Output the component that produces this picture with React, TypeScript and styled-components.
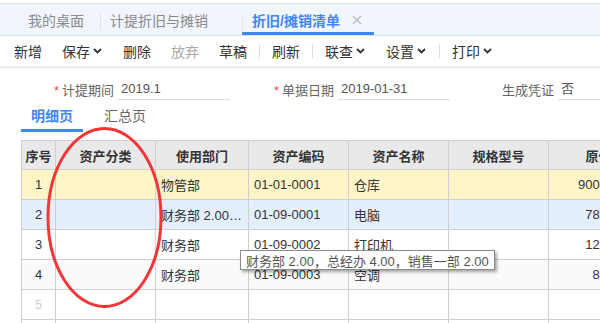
import React from 'react';
import styled, { createGlobalStyle, css } from 'styled-components';

const GlobalStyle = createGlobalStyle`
  html, body {
    margin: 0;
    padding: 0;
    overflow: hidden;
    background: #fff;
  }
  body {
    font-family: "Liberation Sans", "Noto Sans CJK SC", sans-serif;
    color: #333;
  }
`;

const Page = styled.div`
  position: relative;
  width: 600px;
  height: 323px;
  overflow: hidden;
`;

const TabBar = styled.div`
  margin-top: 3px;
  height: 31px;
  display: flex;
  align-items: stretch;
  padding-left: 18px;
  background: #f1f5fd;
  border-top: 1px solid #dcdfe4;
  border-bottom: 1px solid #dde4ef;
`;

type TabProps = { active?: boolean; first?: boolean };

const Tab = styled.div<TabProps>`
  position: relative;
  display: flex;
  align-items: center;
  padding: 0 12px 0 10px;
  font-size: 14px;
  color: #8a8a8a;
  ${(p) =>
    p.first &&
    css`
      padding-right: 16px;
    `}
  ${(p) =>
    !p.first &&
    css`
      &::before {
        content: '';
        position: absolute;
        left: 0;
        top: 10px;
        height: 16px;
        width: 1px;
        background: #e0e4ea;
      }
    `}
  ${(p) =>
    p.active &&
    css`
      color: #3e87f6;
      font-weight: bold;
      box-shadow: inset 0 -3px 0 #3e87f6;
    `}
`;

const CloseSlot = styled.span<{ visible?: boolean }>`
  display: flex;
  align-items: center;
  width: 10px;
  height: 10px;
  margin-left: 12px;
  visibility: ${(p) => (p.visible ? 'visible' : 'hidden')};
`;

const Toolbar = styled.div`
  height: 30px;
  display: flex;
  align-items: center;
  padding-left: 4px;
  background: #fff;
  box-shadow: 0 2px 3px rgba(0, 0, 0, 0.1);
`;

const ToolButton = styled.div<{ disabled?: boolean }>`
  display: flex;
  align-items: center;
  padding: 0 10px;
  font-size: 14px;
  color: ${(p) => (p.disabled ? '#a8a8a8' : '#333')};
`;

const Caret = styled.span`
  display: flex;
  align-items: center;
  width: 10px;
  margin-left: 3px;
`;

const ToolSep = styled.span`
  width: 1px;
  height: 15px;
  margin: 0 2px;
  background: #dedede;
`;

const FormRow = styled.div`
  display: flex;
  margin-top: 12px;
  padding-left: 14px;
  gap: 4px;
`;

const Field = styled.div`
  display: flex;
  align-items: center;
  width: 216px;
  flex-shrink: 0;
`;

const FieldLabel = styled.div`
  width: 100px;
  margin-right: 4px;
  text-align: right;
  font-size: 13px;
  color: #666;
`;

const Required = styled.span`
  color: #f04848;
  margin-right: 3px;
`;

const FieldValue = styled.div`
  width: 112px;
  height: 22px;
  line-height: 22px;
  padding-left: 3px;
  box-sizing: border-box;
  flex-shrink: 0;
  font-size: 13px;
  color: #555;
  border-bottom: 1px solid #dcdcdc;
`;

const SubTabs = styled.div`
  display: flex;
  margin-left: 21px;
  height: 32px;
  gap: 11px;
`;

const SubTab = styled.div<{ active?: boolean }>`
  display: flex;
  align-items: center;
  padding: 0 10px;
  box-sizing: border-box;
  font-size: 14px;
  color: #666;
  border-bottom: 3px solid transparent;
  ${(p) =>
    p.active &&
    css`
      color: #3e87f6;
      font-weight: bold;
      border-bottom-color: #3e87f6;
    `}
`;

const Grid = styled.div`
  margin-top: 8px;
  margin-left: 21px;
  width: 628px;
  border-left: 1px solid #cfcfcf;
  border-top: 1px solid #cfcfcf;
`;

const columns = '34px 100px 93px 100px 100px 100px 100px';

const HeaderRow = styled.div`
  display: grid;
  grid-template-columns: ${columns};
  height: 29px;
  background: #e9e9e9;
`;

type RowTone = 'selected' | 'hover' | 'plain' | 'alt';

const toneColor: Record<RowTone, string> = {
  selected: '#fff5c9',
  hover: '#e4effd',
  plain: '#ffffff',
  alt: '#fafafa',
};

const BodyRow = styled.div<{ tone: RowTone }>`
  display: grid;
  grid-template-columns: ${columns};
  height: 30px;
  background: ${(p) => toneColor[p.tone]};
`;

const Cell = styled.div<{ align?: 'left' | 'center' | 'right'; muted?: boolean }>`
  box-sizing: border-box;
  border-right: 1px solid #cfcfcf;
  border-bottom: 1px solid #cfcfcf;
  padding: 0 5px;
  display: flex;
  align-items: center;
  justify-content: ${(p) =>
    p.align === 'center' ? 'center' : p.align === 'right' ? 'flex-end' : 'flex-start'};
  font-size: 13px;
  color: ${(p) => (p.muted ? '#d0d0d0' : '#333')};
  white-space: nowrap;
  overflow: hidden;
`;

const CellText = styled.span`
  overflow: hidden;
  text-overflow: ellipsis;
  white-space: nowrap;
`;

const HeadCell = styled(Cell)`
  justify-content: center;
  font-weight: bold;
  color: #333;
`;

const Tooltip = styled.div`
  position: absolute;
  left: 240px;
  top: 250px;
  height: 20px;
  padding: 0 5px;
  box-sizing: border-box;
  display: flex;
  align-items: center;
  background: #fff;
  border: 1px solid #8c8c8c;
  box-shadow: 2px 2px 3px rgba(0, 0, 0, 0.35);
  font-size: 13px;
  color: #555;
  white-space: nowrap;
`;

const Annotation = styled.svg`
  position: absolute;
  left: 0;
  top: 0;
  pointer-events: none;
`;

function Chevron() {
  return (
    <svg width="9" height="6" viewBox="0 0 9 6">
      <polyline points="1,1 4.5,4.5 8,1" fill="none" stroke="#333" strokeWidth="1.8" />
    </svg>
  );
}

function CloseIcon() {
  return (
    <svg width="10" height="10" viewBox="0 0 10 10">
      <path d="M1 1 L9 9 M9 1 L1 9" stroke="#bcbcbc" strokeWidth="1.4" />
    </svg>
  );
}

type Asset = {
  no: number;
  dept: string;
  code: string;
  name: string;
  value: string;
  tone: RowTone;
};

const assets: Asset[] = [
  { no: 1, dept: '物管部', code: '01-01-0001', name: '仓库', value: '900,000.00', tone: 'selected' },
  { no: 2, dept: '财务部 2.00，总经办 4.00，销售一部 2.00', code: '01-09-0001', name: '电脑', value: '78,000.00', tone: 'hover' },
  { no: 3, dept: '财务部', code: '01-09-0002', name: '打印机', value: '12,000.00', tone: 'plain' },
  { no: 4, dept: '财务部', code: '01-09-0003', name: '空调', value: '8,000.00', tone: 'alt' },
];

const headers = ['序号', '资产分类', '使用部门', '资产编码', '资产名称', '规格型号', '原值'];

export default function App() {
  return (
    <Page>
      <GlobalStyle />
      <TabBar>
        <Tab first>我的桌面</Tab>
        <Tab>
          计提折旧与摊销
          <CloseSlot />
        </Tab>
        <Tab active>
          折旧/摊销清单
          <CloseSlot visible>
            <CloseIcon />
          </CloseSlot>
        </Tab>
      </TabBar>

      <Toolbar>
        <ToolButton>新增</ToolButton>
        <ToolButton>
          保存
          <Caret>
            <Chevron />
          </Caret>
        </ToolButton>
        <ToolButton>删除</ToolButton>
        <ToolButton disabled>放弃</ToolButton>
        <ToolButton>草稿</ToolButton>
        <ToolSep />
        <ToolButton>刷新</ToolButton>
        <ToolSep />
        <ToolButton>
          联查
          <Caret>
            <Chevron />
          </Caret>
        </ToolButton>
        <ToolButton>
          设置
          <Caret>
            <Chevron />
          </Caret>
        </ToolButton>
        <ToolSep />
        <ToolButton>
          打印
          <Caret>
            <Chevron />
          </Caret>
        </ToolButton>
      </Toolbar>

      <FormRow>
        <Field>
          <FieldLabel>
            <Required>*</Required>计提期间
          </FieldLabel>
          <FieldValue>2019.1</FieldValue>
        </Field>
        <Field>
          <FieldLabel>
            <Required>*</Required>单据日期
          </FieldLabel>
          <FieldValue>2019-01-31</FieldValue>
        </Field>
        <Field>
          <FieldLabel>生成凭证</FieldLabel>
          <FieldValue>否</FieldValue>
        </Field>
      </FormRow>

      <SubTabs>
        <SubTab active>明细页</SubTab>
        <SubTab>汇总页</SubTab>
      </SubTabs>

      <Grid>
        <HeaderRow>
          {headers.map((h) => (
            <HeadCell key={h}>{h}</HeadCell>
          ))}
        </HeaderRow>
        {assets.map((a) => (
          <BodyRow key={a.no} tone={a.tone}>
            <Cell align="center">{a.no}</Cell>
            <Cell />
            <Cell>
              <CellText>{a.dept}</CellText>
            </Cell>
            <Cell>{a.code}</Cell>
            <Cell>{a.name}</Cell>
            <Cell />
            <Cell align="right">{a.value}</Cell>
          </BodyRow>
        ))}
        {[5, 6].map((n) => (
          <BodyRow key={n} tone="plain">
            <Cell align="center" muted>
              {n}
            </Cell>
            <Cell />
            <Cell />
            <Cell />
            <Cell />
            <Cell />
            <Cell />
          </BodyRow>
        ))}
      </Grid>

      <Tooltip>财务部 2.00，总经办 4.00，销售一部 2.00</Tooltip>

      <Annotation width="600" height="323" viewBox="0 0 600 323">
        <ellipse cx="104.5" cy="217.5" rx="56.5" ry="89" fill="none" stroke="#f2363a" strokeWidth="3" />
      </Annotation>
    </Page>
  );
}
